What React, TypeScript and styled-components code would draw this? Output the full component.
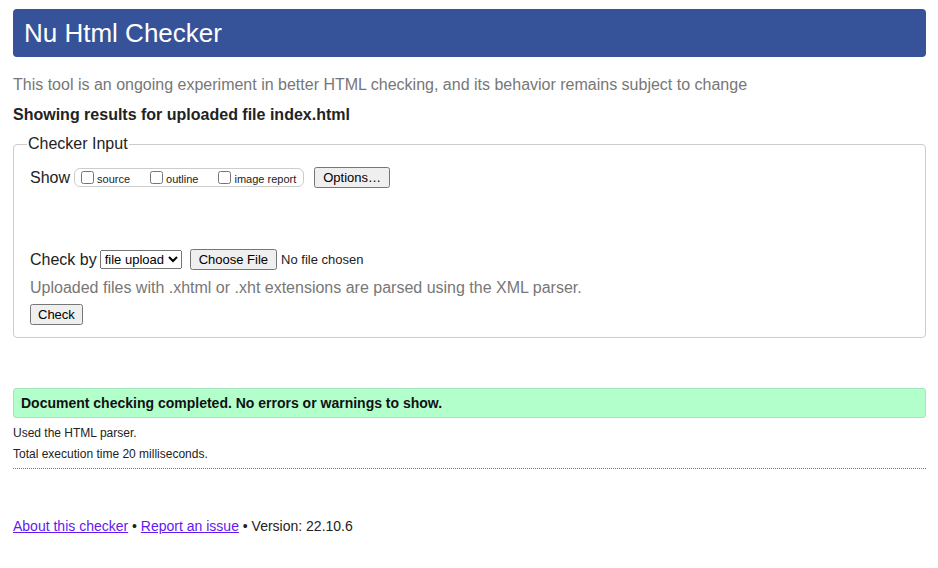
import React from 'react';
import styled, { createGlobalStyle } from 'styled-components';

const GlobalStyle = createGlobalStyle`
  html, body {
    margin: 0;
    padding: 0;
    background: #fff;
  }
  body {
    font-family: "Liberation Sans", Arial, sans-serif;
    color: #222;
  }
`;

const Page = styled.div`
  padding: 9px 12px 20px 13px;
`;

const Header = styled.h1`
  margin: 0;
  height: 48px;
  display: flex;
  align-items: center;
  padding: 0 11px;
  background: #36539a;
  color: #fff;
  border-radius: 4px;
  font-size: 26px;
  font-weight: normal;
`;

const Intro = styled.p`
  margin: 18px 0 0;
  font-size: 16px;
  line-height: 20px;
  color: #777;
`;

const Showing = styled.h2`
  margin: 10px 0 0;
  font-size: 16px;
  line-height: 20px;
  font-weight: bold;
  color: #222;
`;

const Fieldset = styled.fieldset`
  margin: 10px 0 0;
  padding: 14px 16px 12px;
  border: 1px solid #ccc;
  border-radius: 4px;
`;

const Legend = styled.legend`
  padding: 0 1px;
  margin-left: -3px;
  font-size: 16px;
  color: #222;
`;

const Row = styled.div<{ $gap?: number }>`
  display: flex;
  align-items: center;
  margin-top: ${({ $gap }) => $gap ?? 0}px;
  font-size: 16px;
  color: #222;
`;

const Label = styled.span`
  margin-right: 4px;
`;

const Group = styled.span`
  display: inline-flex;
  align-items: center;
  gap: 20px;
  height: 17px;
  padding: 0 7px 0 6px;
  border: 1px solid #ccc;
  border-radius: 6px;
  font-size: 11px;
`;

const CheckLabel = styled.label`
  display: inline-flex;
  align-items: center;
  input {
    margin: 0 3px 0 0;
    width: 13px;
    height: 13px;
  }
  span {
    padding-top: 3px;
  }
`;

const Button = styled.button<{ $left?: number; $pad?: number }>`
  font-family: "Liberation Sans", Arial, sans-serif;
  font-size: 13px;
  margin-left: ${({ $left }) => $left ?? 0}px;
  padding: 1px ${({ $pad }) => $pad ?? 6}px;
  height: 21px;
  color: #000;
`;

const Select = styled.select`
  font-family: "Liberation Sans", Arial, sans-serif;
  font-size: 13px;
  height: 19px;
  width: 82px;
  margin-left: -1px;
  margin-right: 8px;
`;

const FileText = styled.span`
  margin-left: 4px;
  font-size: 13px;
  color: #222;
`;

const Hint = styled.p`
  margin: 8px 0 0;
  font-size: 16px;
  line-height: 20px;
  color: #777;
`;

const Success = styled.div`
  margin-top: 50px;
  padding: 0 7px;
  height: 28px;
  display: flex;
  align-items: center;
  background: #b3ffcc;
  border: 1px solid #a3e6bb;
  border-radius: 3px;
  font-size: 14px;
  font-weight: bold;
  color: #111;
`;

const Details = styled.div`
  padding-top: 5px;
  padding-bottom: 3px;
  border-bottom: 1px dotted #777;
  font-size: 12px;
  line-height: 21px;
  color: #222;
`;

const Footer = styled.p`
  margin: 49px 0 0;
  font-size: 14px;
  color: #222;
  a {
    color: #6219f0;
    text-decoration: underline;
  }
`;

export default function App() {
  return (
    <Page>
      <GlobalStyle />
      <Header>Nu Html Checker</Header>
      <Intro>
        This tool is an ongoing experiment in better HTML checking, and its behavior remains subject to change
      </Intro>
      <Showing>Showing results for uploaded file index.html</Showing>
      <Fieldset>
        <Legend>Checker Input</Legend>
        <Row>
          <Label>Show</Label>
          <Group>
            <CheckLabel>
              <input type="checkbox" />
              <span>source</span>
            </CheckLabel>
            <CheckLabel>
              <input type="checkbox" />
              <span>outline</span>
            </CheckLabel>
            <CheckLabel>
              <input type="checkbox" />
              <span>image report</span>
            </CheckLabel>
          </Group>
          <Button $left={10} $pad={7}>Options…</Button>
        </Row>
        <Row $gap={61}>
          <Label>Check by</Label>
          <Select defaultValue="file">
            <option value="file">file upload</option>
            <option value="address">address</option>
            <option value="text">text input</option>
          </Select>
          <Button $pad={7}>Choose File</Button>
          <FileText>No file chosen</FileText>
        </Row>
        <Hint>Uploaded files with .xhtml or .xht extensions are parsed using the XML parser.</Hint>
        <Row $gap={6}>
          <Button>Check</Button>
        </Row>
      </Fieldset>
      <Success>Document checking completed. No errors or warnings to show.</Success>
      <Details>
        <div>Used the HTML parser.</div>
        <div>Total execution time 20 milliseconds.</div>
      </Details>
      <Footer>
        <a href="#about">About this checker</a> • <a href="#issue">Report an issue</a> • Version: 22.10.6
      </Footer>
    </Page>
  );
}
